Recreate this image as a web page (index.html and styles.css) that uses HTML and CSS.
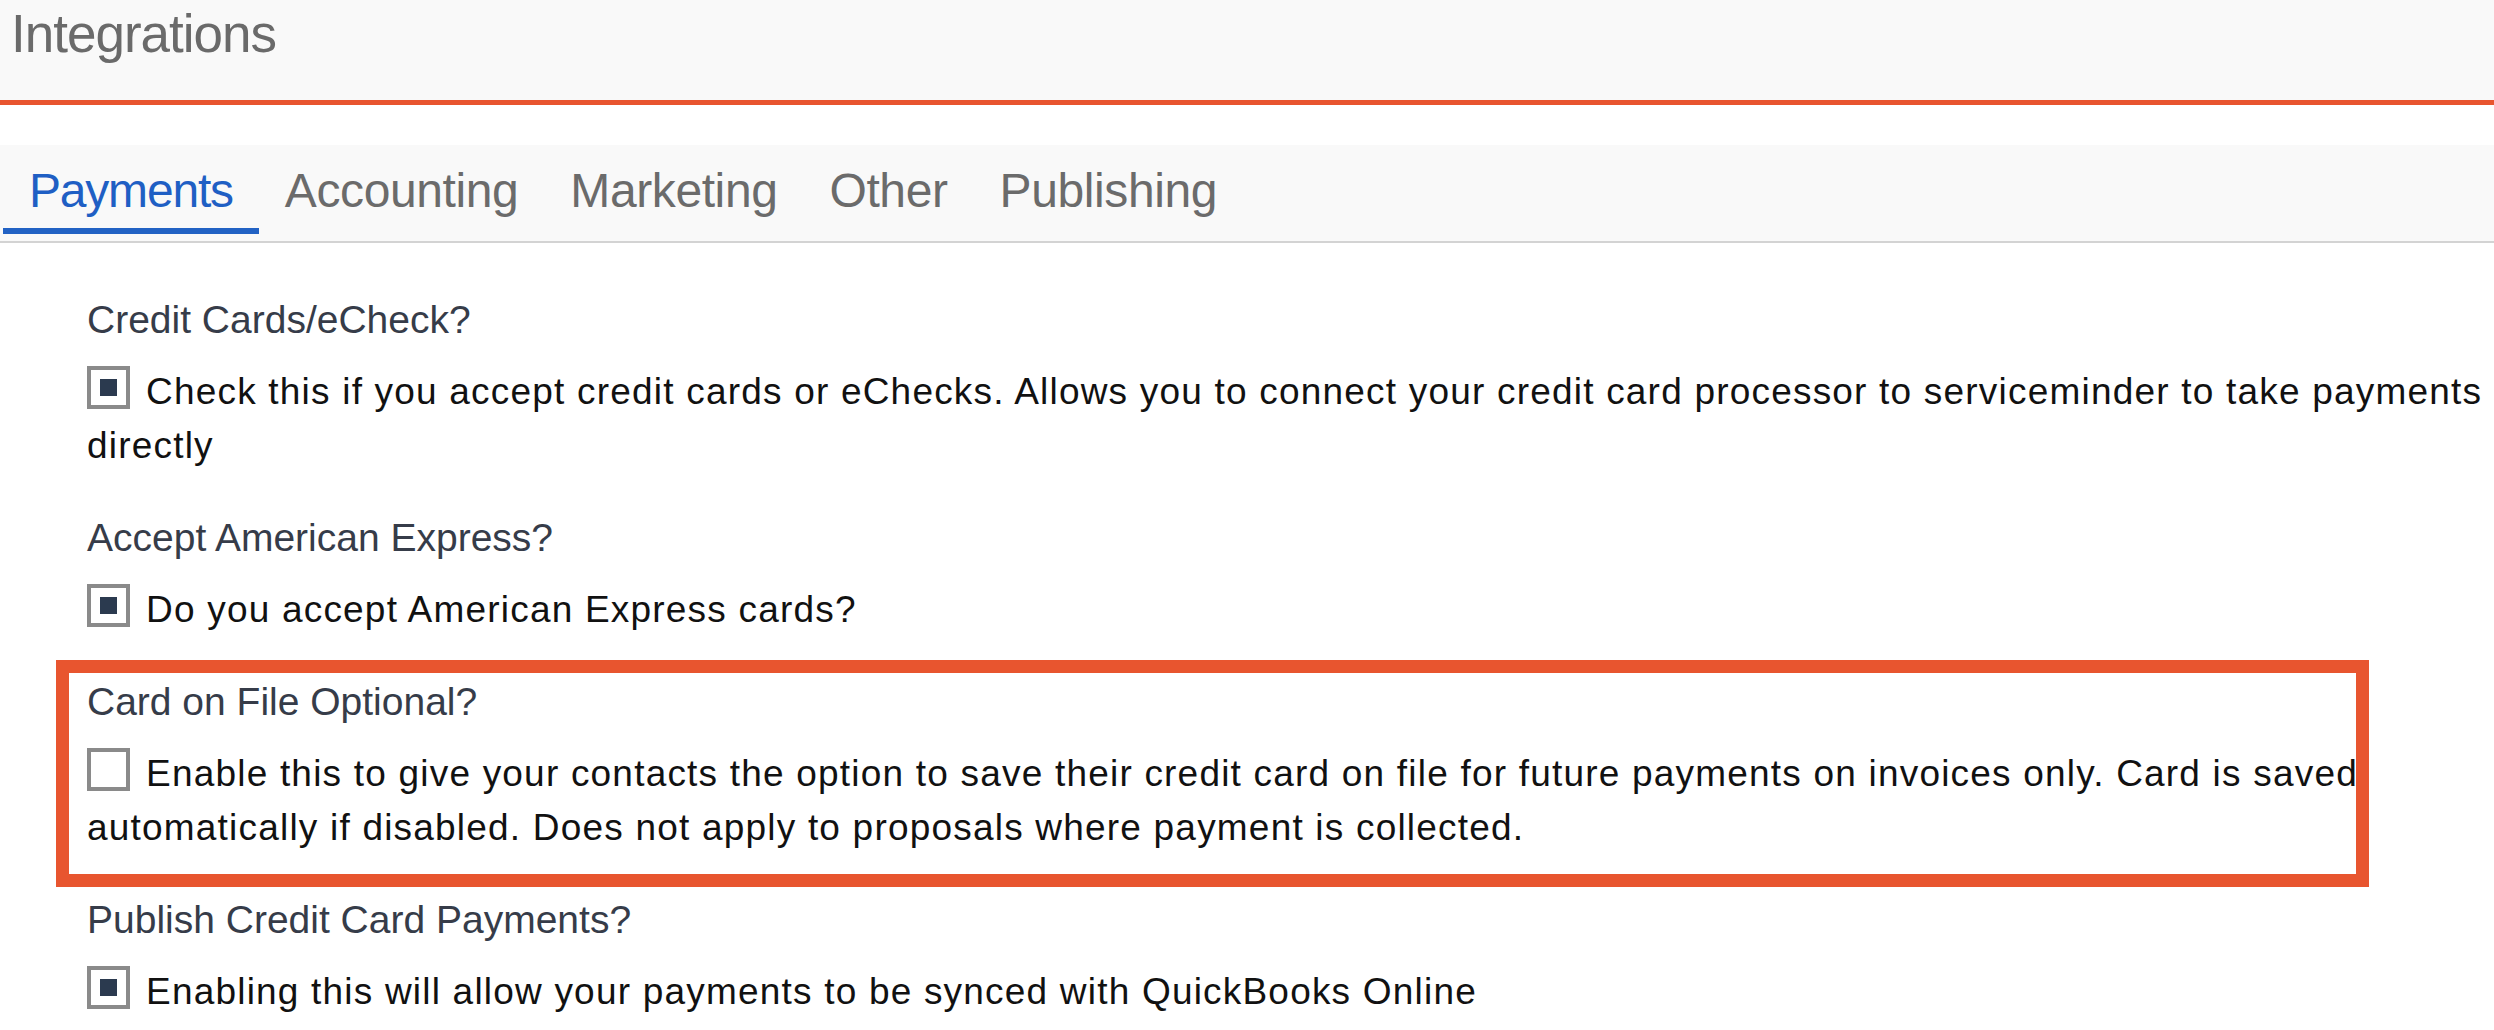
FILE: index.html
```html
<!DOCTYPE html>
<html lang="en">
<head>
<meta charset="utf-8">
<title>Integrations</title>
<link rel="stylesheet" href="styles.css">
</head>
<body>
<header class="page-header">
  <h1 class="page-title">Integrations</h1>
</header>
<nav class="tabs">
  <a class="tab active">Payments</a>
  <a class="tab">Accounting</a>
  <a class="tab">Marketing</a>
  <a class="tab">Other</a>
  <a class="tab">Publishing</a>
</nav>
<main class="content">
  <div class="field">
    <div class="field-label">Credit Cards/eCheck?</div>
    <div class="field-row"><span class="cb checked"></span>Check this if you accept credit cards or eChecks. Allows you to connect your credit card processor to serviceminder to take payments directly</div>
  </div>
  <div class="field">
    <div class="field-label">Accept American Express?</div>
    <div class="field-row"><span class="cb checked"></span>Do you accept American Express cards?</div>
  </div>
  <div class="field highlight">
    <div class="field-label">Card on File Optional?</div>
    <div class="field-row"><span class="cb"></span>Enable this to give your contacts the option to save their credit card on file for future payments on invoices only. Card is saved automatically if disabled. Does not apply to proposals where payment is collected.</div>
  </div>
  <div class="field">
    <div class="field-label">Publish Credit Card Payments?</div>
    <div class="field-row"><span class="cb checked"></span>Enabling this will allow your payments to be synced with QuickBooks Online</div>
  </div>
</main>
</body>
</html>
```

FILE: styles.css
```css
html, body {
  margin: 0;
  padding: 0;
  background: #ffffff;
}

body {
  font-family: "Liberation Sans", Arial, sans-serif;
  color: #111111;
  overflow: hidden;
}

.page-header {
  box-sizing: border-box;
  height: 105px;
  background: #f9f9f9;
  border-bottom: 5px solid #e8552f;
  padding: 4px 0 0 11px;
}

.page-title {
  margin: 0;
  font-size: 53px;
  line-height: 60px;
  font-weight: normal;
  letter-spacing: -1px;
  color: #6a6a6a;
}

.tabs {
  display: flex;
  margin-top: 40px;
  height: 96px;
  background: #f9f9f9;
  border-bottom: 2px solid #d3d3d3;
  padding-left: 3px;
}

.tab {
  display: block;
  padding: 18px 26px 9px;
  margin-bottom: 7px;
  border-bottom: 6px solid transparent;
  font-size: 48px;
  line-height: 56px;
  letter-spacing: -0.4px;
  color: #6b6b6b;
}

.tab.active {
  color: #1f5fc4;
  border-bottom-color: #2262c4;
  letter-spacing: -1.2px;
}

.content {
  padding: 50px 0 0 87px;
}

.field {
  margin-bottom: 38px;
}

.field-label {
  font-size: 39px;
  line-height: 54px;
  color: #363c49;
  margin-bottom: 18px;
}

.field-row {
  font-size: 37px;
  line-height: 54px;
  letter-spacing: 1.2px;
  color: #111111;
}

.cb {
  display: inline-block;
  box-sizing: border-box;
  width: 43px;
  height: 43px;
  border: 4px solid #8a8a8a;
  background: #ffffff;
  vertical-align: -5px;
  margin-right: 16px;
  position: relative;
}

.cb.checked::after {
  content: "";
  position: absolute;
  left: 9px;
  top: 9px;
  width: 17px;
  height: 17px;
  background: #2b3a4f;
}

.highlight {
  position: relative;
}

.highlight::before {
  content: "";
  position: absolute;
  left: -31px;
  top: -15px;
  width: 2313px;
  height: 227px;
  box-sizing: border-box;
  border: 13px solid #e8552f;
  pointer-events: none;
}
```
